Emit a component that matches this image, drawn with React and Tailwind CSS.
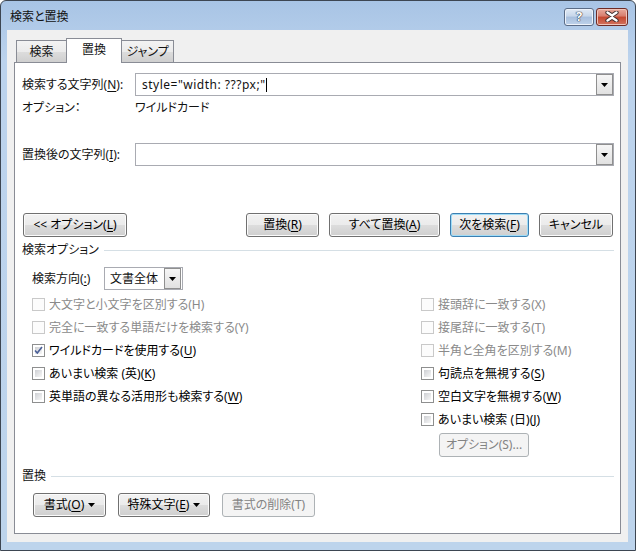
import React from 'react';

const btnBase =
  'h-[24px] rounded-[3px] border flex items-center justify-center text-[12px] leading-none';
const btnNormal =
  'border-[#707070] bg-[linear-gradient(#f2f2f2,#ebebeb_50%,#dddddd_50%,#cfcfcf)] shadow-[inset_0_0_0_1px_#fbfbfb] text-black';
const btnFocus =
  'border-[#3c7fb1] bg-[linear-gradient(#f2f2f2,#ebebeb_50%,#dddddd_50%,#cfcfcf)] shadow-[inset_0_0_0_1px_#9fdcf7] text-black';
const btnOff = 'border-[#adb2b5] bg-[#f4f4f4] text-[#838383]';

function Arrow() {
  return (
    <svg width="7" height="4" viewBox="0 0 7 4">
      <path d="M0 0h7L3.5 4z" fill="#000" />
    </svg>
  );
}

function U({ children }) {
  return <span className="underline underline-offset-[2px]">{children}</span>;
}

function Btn({ children, className = '', kind = 'normal' }) {
  const look = kind === 'focus' ? btnFocus : kind === 'off' ? btnOff : btnNormal;
  return <div className={`${btnBase} ${look} ${className}`}>{children}</div>;
}

function DropBtn() {
  return (
    <div className="w-[17px] h-[21px] border border-[#8f8f8f] bg-[linear-gradient(#f6f6f6,#e1e1e1)] flex items-center justify-center">
      <Arrow />
    </div>
  );
}

function Combo({ children }) {
  return (
    <div className="flex-1 h-[23px] border border-[#a9abb2] bg-white flex items-center pl-[6px]">
      <div className="flex-1 flex items-center">{children}</div>
      <DropBtn />
    </div>
  );
}

function Box({ checked, disabled }) {
  if (disabled) {
    return <span className="w-[13px] h-[13px] border border-[#c9c9c9] bg-[#fcfcfc] shrink-0" />;
  }
  return (
    <span className="w-[13px] h-[13px] border border-[#8e8f8f] bg-white p-[2px] shrink-0 flex">
      <span className="flex-1 bg-[linear-gradient(135deg,#cdcfd3,#f7f7f7)] flex items-center justify-center">
        {checked && (
          <svg width="9" height="9" viewBox="0 0 9 9" className="-m-[1px]">
            <path d="M1 4.5l2.3 2.6L8 1" fill="none" stroke="#4a5f97" strokeWidth="1.6" />
          </svg>
        )}
      </span>
    </span>
  );
}

function CB({ children, checked, disabled }) {
  return (
    <div className="h-[23px] flex items-center gap-[4px]">
      <Box checked={checked} disabled={disabled} />
      <span className={disabled ? 'text-[#8a8a8a]' : 'text-black'}>{children}</span>
    </div>
  );
}

function Header({ children }) {
  return (
    <div className="h-[16px] flex items-center">
      <span>{children}</span>
      <div className="flex-1 h-px bg-[#d5dfe5] ml-[5px]" />
    </div>
  );
}

export default function App() {
  return (
    <div className="w-[636px] h-[551px] bg-white font-['Noto_Sans','Noto_Sans_CJK_JP',sans-serif] [font-feature-settings:'palt'] text-[12px] text-[#111]">
      <div className="w-full h-full rounded-t-[6px] border border-[#3d4652] bg-[linear-gradient(#a8c4e5,#bcd3ed_60px,#bdd4ec)] flex flex-col">
        {/* title bar */}
        <div className="h-[29px] flex items-center pl-[9px] pr-[7px]">
          <span className="text-[12px] mt-[2px]">検索と置換</span>
          <div className="ml-auto flex gap-[2px] mt-[2px]">
            <div className="w-[30px] h-[18px] rounded-[3px] border border-[#5b6c86] bg-[linear-gradient(#e1eaf5,#c6d6ea_45%,#a8bfdd_50%,#bed2ea)] flex items-center justify-center shadow-[inset_0_0_0_1px_#eef3fa]">
              <span className="text-white font-bold text-[13px] leading-none [text-shadow:0_0_1px_#2a3342,0_0_1px_#2a3342,0_0_1px_#2a3342]">?</span>
            </div>
            <div className="w-[32px] h-[18px] rounded-[3px] border border-[#6e2b25] bg-[linear-gradient(#e8aa9c,#d77d6d_45%,#c4472f_50%,#d2735f)] flex items-center justify-center shadow-[inset_0_0_0_1px_#f0c4b9]">
              <svg width="16" height="11" viewBox="0 0 16 11">
                <path d="M3.5 1.5l4.5 3 4.5-3M3.5 9.5l4.5-3 4.5 3" fill="none" stroke="#3b2a2a" strokeWidth="4.2" strokeLinecap="round" />
                <path d="M3.5 1.5l4.5 3 4.5-3M3.5 9.5l4.5-3 4.5 3" fill="none" stroke="#fff" strokeWidth="2.4" strokeLinecap="round" />
              </svg>
            </div>
          </div>
        </div>

        {/* client area */}
        <div className="flex-1 ml-[6px] mr-[7px] mb-[8px] bg-[#f0f0f0] pt-[8px] pl-[7px] pr-[8px] pb-[8px] flex flex-col">
          {/* tabs */}
          <div className="flex items-end -mb-px relative z-10 pl-[2px]">
            <div className="w-[51px] h-[22px] mb-px border border-b-0 border-[#898c95] bg-[linear-gradient(#f3f3f3,#ebebeb_50%,#dddddd_50%,#cfcfcf)] flex items-center justify-center">
              検索
            </div>
            <div className="w-[56px] h-[25px] -ml-px border border-b-0 border-[#898c95] bg-white flex items-center justify-center pb-[2px]">
              置換
            </div>
            <div className="w-[53px] h-[22px] mb-px -ml-px border border-b-0 border-[#898c95] bg-[linear-gradient(#f3f3f3,#ebebeb_50%,#dddddd_50%,#cfcfcf)] flex items-center justify-center">
              ジャンプ
            </div>
          </div>

          {/* panel */}
          <div className="w-[607px] h-[472px] border border-[#898c95] bg-white pt-[10px] pl-[7px] pr-[6px] flex flex-col">
            <div className="h-[23px] flex items-center">
              <span className="w-[113px]">
                検索する文字列(<U>N</U>):
              </span>
              <Combo>
                <span className="tracking-[0.5px]">style="width: ???px;"</span>
                <span className="w-px h-[14px] bg-black" />
              </Combo>
            </div>
            <div className="h-[24px] flex items-center">
              <span className="w-[113px]">オプション：</span>
              <span>ワイルドカード</span>
            </div>
            <div className="h-[23px] mt-[23px] flex items-center">
              <span className="w-[113px]">
                置換後の文字列(<U>I</U>):
              </span>
              <Combo />
            </div>

            <div className="h-[24px] mt-[47px] flex items-center pl-px">
              <Btn className="w-[104px]">
                &lt;&lt; オプション(<U>L</U>)
              </Btn>
              <div className="ml-auto flex gap-[10px] pr-px">
                <Btn className="w-[73px]">
                  置換(<U>R</U>)
                </Btn>
                <Btn className="w-[111px]">
                  すべて置換(<U>A</U>)
                </Btn>
                <Btn className="w-[79px]" kind="focus">
                  次を検索(<U>F</U>)
                </Btn>
                <Btn className="w-[74px]">キャンセル</Btn>
              </div>
            </div>

            <div className="mt-[5px]">
              <Header>検索オプション</Header>
            </div>

            <div className="h-[23px] mt-[9px] flex items-center pl-[10px]">
              <span className="w-[72px]">
                検索方向(<U>:</U>)
              </span>
              <div className="w-[79px] h-[23px] border border-[#a9abb2] bg-white flex items-center pl-[5px] pr-px">
                <span className="flex-1">文書全体</span>
                <DropBtn />
              </div>
            </div>

            <div className="flex mt-[3px]">
              <div className="w-[399px] pl-[10px] flex flex-col">
                <CB disabled>大文字と小文字を区別する(H)</CB>
                <CB disabled>完全に一致する単語だけを検索する(Y)</CB>
                <CB checked>
                  ワイルドカードを使用する(<U>U</U>)
                </CB>
                <CB>
                  あいまい検索 (英)(<U>K</U>)
                </CB>
                <CB>
                  英単語の異なる活用形も検索する(<U>W</U>)
                </CB>
              </div>
              <div className="flex flex-col">
                <CB disabled>接頭辞に一致する(X)</CB>
                <CB disabled>接尾辞に一致する(T)</CB>
                <CB disabled>半角と全角を区別する(M)</CB>
                <CB>
                  句読点を無視する(<U>S</U>)
                </CB>
                <CB>
                  空白文字を無視する(<U>W</U>)
                </CB>
                <CB>
                  あいまい検索 (日)(<U>J</U>)
                </CB>
                <Btn kind="off" className="w-[90px] ml-[18px] mt-[2px]">
                  オプション(S)...
                </Btn>
              </div>
            </div>

            <div className="mt-[11px]">
              <Header>置換</Header>
            </div>

            <div className="h-[24px] mt-[9px] flex items-center gap-[12px] pl-[11px]">
              <Btn className="w-[73px] gap-[4px]">
                <span>
                  書式(<U>O</U>)
                </span>
                <Arrow />
              </Btn>
              <Btn className="w-[92px] gap-[4px]">
                <span>
                  特殊文字(<U>E</U>)
                </span>
                <Arrow />
              </Btn>
              <Btn kind="off" className="w-[93px]">
                書式の削除(T)
              </Btn>
            </div>
          </div>
        </div>
      </div>
    </div>
  );
}
